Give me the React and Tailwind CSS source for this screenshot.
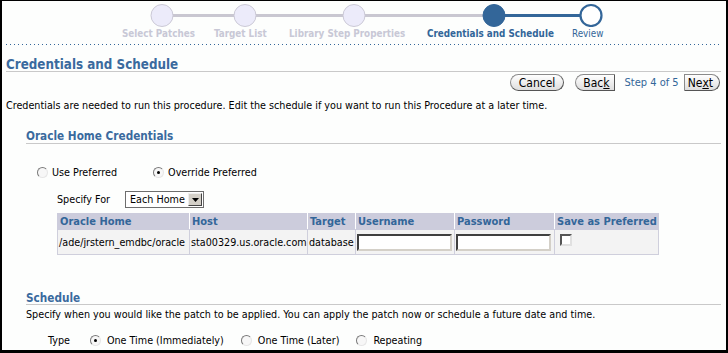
import React from "react";

const F = { fontFamily: '"DejaVu Sans Condensed", "DejaVu Sans", sans-serif' };

function Radio({ checked }) {
  return (
    <span className="relative inline-block w-[11px] h-[11px] rounded-full border border-t-[#7a7a7a] border-l-[#7a7a7a] border-b-[#e6e6e6] border-r-[#e6e6e6] bg-[#f7f7f7] shrink-0">
      {checked && <span className="absolute left-[3px] top-[3px] w-[3px] h-[3px] rounded-full bg-black" />}
    </span>
  );
}

function Train() {
  const circles = [
    { x: 160, s: "done" },
    { x: 243, s: "done" },
    { x: 352, s: "done" },
    { x: 492, s: "active" },
    { x: 589, s: "next" },
  ];
  return (
    <svg width="724" height="26" className="block">
      <line x1="160" y1="14.5" x2="492" y2="14.5" stroke="#c9c7d1" strokeWidth="3" />
      <line x1="492" y1="14.5" x2="589" y2="14.5" stroke="#336699" strokeWidth="3" />
      {circles.map((c, i) => (
        <circle
          key={i}
          cx={c.x}
          cy="14.5"
          r={c.s === "next" ? 10.5 : 11}
          fill={c.s === "done" ? "#ecebfa" : c.s === "active" ? "#336699" : "#ffffff"}
          stroke={c.s === "done" ? "#cbc9d6" : "#336699"}
          strokeWidth={c.s === "next" ? 2.2 : 1}
        />
      ))}
    </svg>
  );
}

const btn =
  "h-[17px] border border-[#8a8a8a] border-b-[#555] border-r-[#555] bg-gradient-to-b from-white to-[#dedede] text-[12px] leading-none flex items-center";

export default function App() {
  return (
    <div
      style={F}
      className="w-[728px] h-[353px] overflow-hidden bg-[#fdfefd] border-l-2 border-t border-r-2 border-b-[3px] border-black text-[11px] text-black leading-[13px]"
    >
      <Train />
      <div className="flex text-[9.8px] font-bold text-[#c8c8d6] pl-[120px] h-[13px] leading-[13px] whitespace-nowrap">
        <span className="w-[92px]">Select Patches</span>
        <span className="w-[75px]">Target List</span>
        <span className="w-[138px]">Library Step Properties</span>
        <span className="w-[145px] text-[#336699]">Credentials and Schedule</span>
        <span className="font-normal text-[#336699]">Review</span>
      </div>
      <div className="ml-[4px] mr-[4px] mt-[4px] h-[1px] bg-[linear-gradient(to_right,#336699_0,#336699_1px,transparent_1px)] bg-[length:4px_1px]" />
      <div className="ml-[4px] mr-[5px] mt-[13px] text-[13.3px] leading-[13px] font-bold text-[#3a6a9e] border-b border-[#c9c9c9]">
        Credentials and Schedule
      </div>
      <div className="flex justify-end items-center mt-[2px] pr-[6px] h-[17px]">
        <button className={`${btn} px-[8px] rounded-full`}>Cancel</button>
        <button className={`${btn} ml-[11px] pl-[7px] pr-[4px] rounded-l-full rounded-r-[2px]`}>
          Bac<u>k</u>
        </button>
        <span className="ml-[10px] mr-[5px] text-[11px] text-[#336699]">Step 4 of 5</span>
        <button className={`${btn} pl-[3px] pr-[6px] rounded-r-full rounded-l-[2px]`}>
          Ne<u>x</u>t
        </button>
      </div>
      <div className="ml-[4px] mt-[8px] text-[10.7px] leading-[13px] whitespace-nowrap">
        Credentials are needed to run this procedure. Edit the schedule if you want to run this Procedure at a later time.
      </div>
      <div className="ml-[24px] mr-[5px] mt-[18px] text-[11.7px] leading-[13px] font-bold text-[#3a6a9e] border-b border-[#c9c9c9]">
        Oracle Home Credentials
      </div>
      <div className="flex items-start ml-[35px] mt-[22px] h-[13px] text-[10.7px]">
        <span className="mt-[1px]"><Radio /></span>
        <span className="ml-[4px]">Use Preferred</span>
        <span className="ml-[36px] mt-[1px]"><Radio checked /></span>
        <span className="ml-[4px]">Override Preferred</span>
      </div>
      <div className="flex items-center ml-[55px] mt-[12px] h-[17px] text-[10.7px]">
        <span>Specify For</span>
        <span className="ml-[15px] flex items-center w-[79px] h-[17px] border border-[#6d6d6d] bg-white pl-[4px] justify-between pr-[1px]">
          <span>Each Home</span>
          <span className="w-[14px] h-[13px] border border-t-[#eee] border-l-[#eee] border-b-[#444] border-r-[#444] bg-[#d4d0c8] flex items-center justify-center">
            <svg width="7" height="4"><path d="M0 0 H7 L3.5 4 Z" fill="#000" /></svg>
          </span>
        </span>
      </div>
      <table className="ml-[55px] mt-[5px] border-collapse table-fixed w-[601px] text-[10.7px]">
        <colgroup>
          <col className="w-[132px]" />
          <col className="w-[118px]" />
          <col className="w-[48px]" />
          <col className="w-[99px]" />
          <col className="w-[100px]" />
          <col className="w-[104px]" />
        </colgroup>
        <thead>
          <tr className="bg-[#ccccdc] text-[#336699] font-bold h-[16px] text-left text-[11px]">
            <th className="px-[2px] p-0 border border-[#ccccdc] border-r-white font-bold">Oracle Home</th>
            <th className="px-[2px] border border-[#ccccdc] border-r-white font-bold">Host</th>
            <th className="px-[2px] border border-[#ccccdc] border-r-white font-bold">Target</th>
            <th className="px-[2px] border border-[#ccccdc] border-r-white font-bold">Username</th>
            <th className="px-[2px] border border-[#ccccdc] border-r-white font-bold">Password</th>
            <th className="px-[2px] border border-[#ccccdc] font-bold whitespace-nowrap">Save as Preferred</th>
          </tr>
        </thead>
        <tbody>
          <tr className="bg-[#f3f3f3] h-[25px]">
            <td className="px-[1px] border border-[#cfcfdc] whitespace-nowrap overflow-hidden">/ade/jrstern_emdbc/oracle</td>
            <td className="px-[1px] border border-[#cfcfdc] whitespace-nowrap overflow-hidden">sta00329.us.oracle.com</td>
            <td className="px-[1px] border border-[#cfcfdc]">database</td>
            <td className="px-[1px] border border-[#cfcfdc]">
              <span className="block w-[95px] h-[17px] bg-white border-2 border-t-[#404040] border-l-[#404040] border-b-[#d4d0c8] border-r-[#d4d0c8]" />
            </td>
            <td className="px-[1px] border border-[#cfcfdc]">
              <span className="block w-[95px] h-[17px] bg-white border-2 border-t-[#404040] border-l-[#404040] border-b-[#d4d0c8] border-r-[#d4d0c8]" />
            </td>
            <td className="pl-[5px] border border-[#cfcfdc] align-top pt-[4px]">
              <span className="block w-[12px] h-[12px] bg-white border-2 border-t-[#555] border-l-[#555] border-b-[#e0e0e0] border-r-[#e0e0e0]" />
            </td>
          </tr>
        </tbody>
      </table>
      <div className="ml-[24px] mr-[5px] mt-[37px] text-[11.7px] leading-[12px] font-bold text-[#3a6a9e] border-b border-[#c9c9c9]">
        Schedule
      </div>
      <div className="ml-[24px] mt-[3px] text-[10.7px] leading-[13px] whitespace-nowrap">
        Specify when you would like the patch to be applied. You can apply the patch now or schedule a future date and time.
      </div>
      <div className="flex items-start ml-[46px] mt-[13px] h-[13px] text-[10.7px]">
        <span>Type</span>
        <span className="ml-[20px] mt-[1px]"><Radio checked /></span>
        <span className="ml-[6px]">One Time (Immediately)</span>
        <span className="ml-[17px] mt-[1px]"><Radio /></span>
        <span className="ml-[6px]">One Time (Later)</span>
        <span className="ml-[17px] mt-[1px]"><Radio /></span>
        <span className="ml-[6px]">Repeating</span>
      </div>
    </div>
  );
}
